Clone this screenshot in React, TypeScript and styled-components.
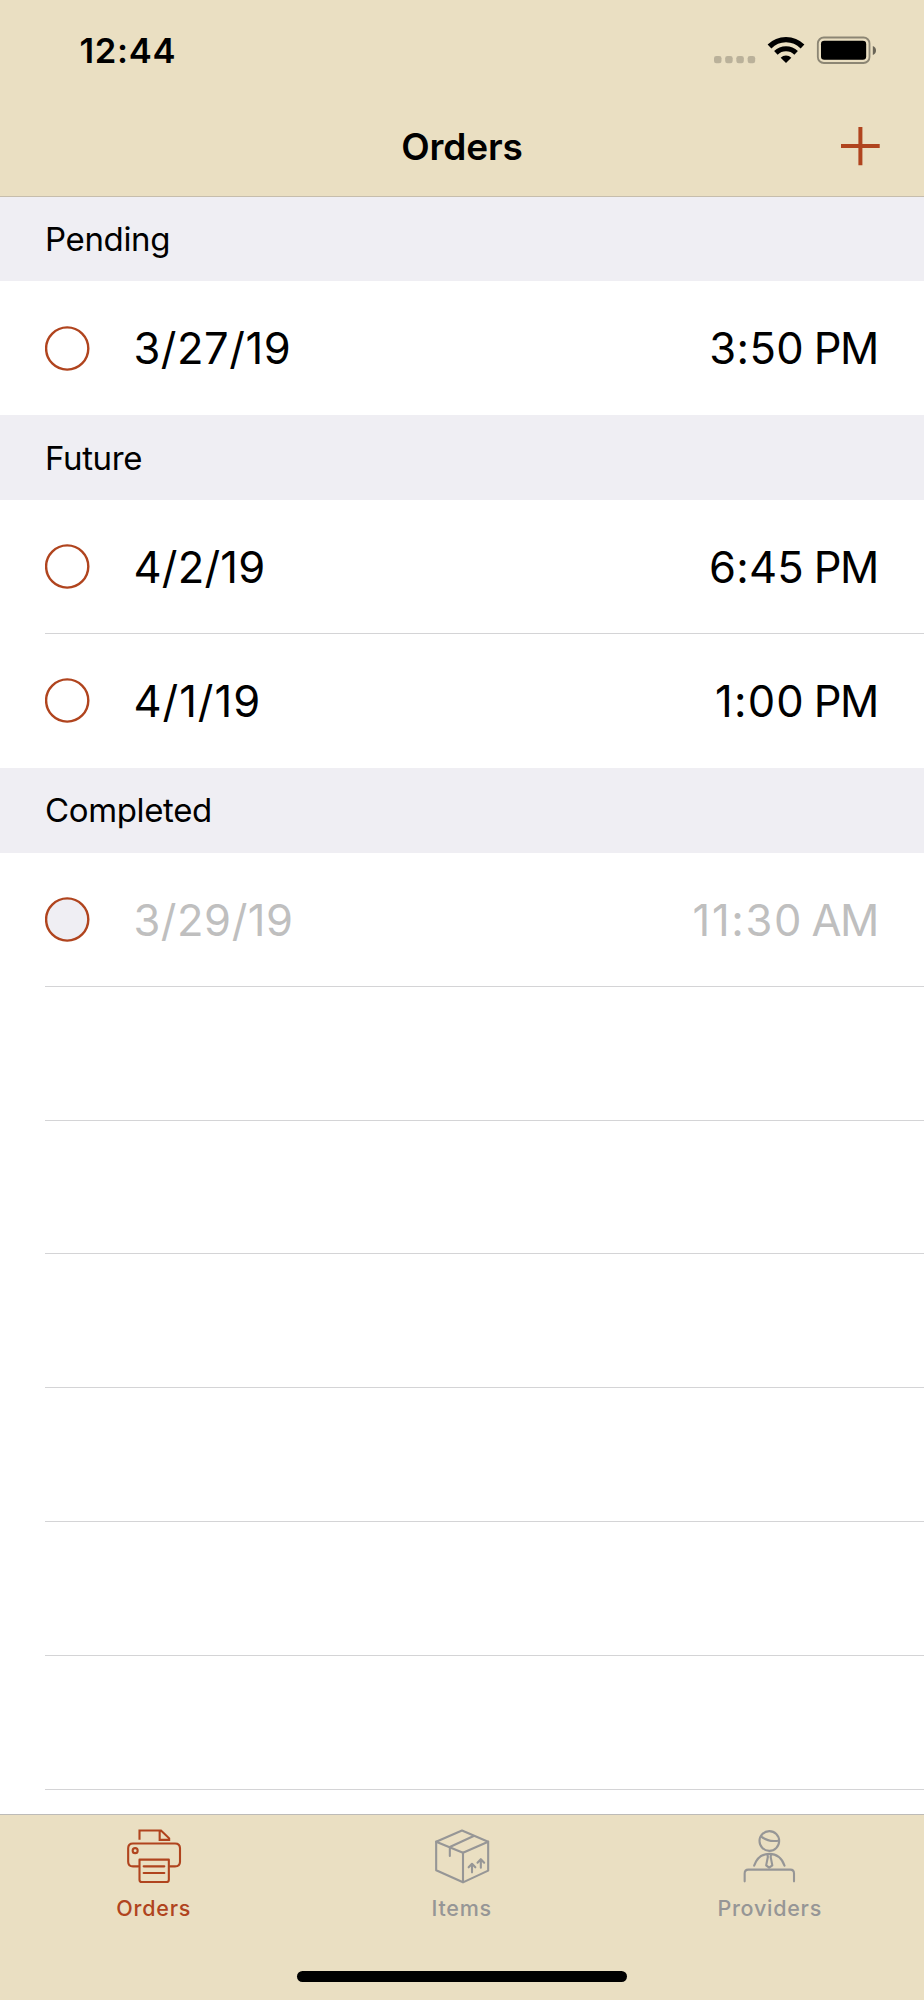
import React from "react";
import styled, { createGlobalStyle } from "styled-components";

const accent = "#b0441e";
const sand = "#eadfc2";
const muted = "#969696";

const GlobalStyle = createGlobalStyle`
  *, *::before, *::after { box-sizing: border-box; }
  body { margin: 0; background: #fff; }
`;

const Screen = styled.div`
  display: flex;
  flex-direction: column;
  width: 924px;
  height: 2000px;
  overflow: hidden;
  background: #fff;
  color: #000;
  font-family: Inter, "Liberation Sans", sans-serif;
`;

const Header = styled.header`
  flex: none;
  height: 197px;
  background: ${sand};
  border-bottom: 1px solid #c6bdac;
`;

const StatusBar = styled.div`
  display: flex;
  justify-content: space-between;
  height: 98px;
  padding: 29px 44px 0 79.4px;
`;

const Clock = styled.div`
  font-size: 34.6px;
  font-weight: 600;
  line-height: 42px;
  letter-spacing: 0.7px;
`;

const StatusIcons = styled.svg`
  display: block;
  width: 168px;
  height: 31px;
  margin-top: 5px;
`;

const NavBar = styled.div`
  display: grid;
  grid-template-columns: 1fr auto 1fr;
  align-items: center;
  height: 97px;
  padding: 0 44px;
`;

const Title = styled.h1`
  grid-column: 2;
  margin: 0;
  padding-top: 1px;
  font-size: 37px;
  font-weight: 600;
  line-height: 44px;
  letter-spacing: -0.1px;
`;

const AddButton = styled.button`
  justify-self: end;
  display: block;
  width: 39px;
  height: 39px;
  padding: 0;
  border: 0;
  background: none;

  svg { display: block; }
`;

const List = styled.main`
  flex: 1;
  min-height: 0;
  margin-top: -0.5px;
  overflow: hidden;
`;

const SectionTitle = styled.h2`
  display: flex;
  align-items: center;
  height: 84.8px;
  margin: 0;
  padding: 0 45px;
  background: #efeef3;
  font-size: 33px;
  font-weight: 400;
  line-height: 40px;
  letter-spacing: -0.36px;
`;

const Row = styled.div<{ $divided?: boolean; $done?: boolean }>`
  display: flex;
  align-items: center;
  height: 133.93px;
  margin-left: 45px;
  padding-top: ${(p) => (p.$divided ? "1px" : "0")};
  padding-right: 46.3px;
  border-bottom: ${(p) => (p.$divided ? "1px solid #d4d4d6" : "0")};
  color: ${(p) => (p.$done ? "#bfbfbf" : "#000")};
  font-size: 43.5px;
  line-height: 54px;
`;

const Check = styled.svg`
  flex: none;
  width: 45px;
  height: 45px;
  margin-right: 43.4px;
`;

const DateText = styled.span<{ $tracking: number }>`
  flex: 1;
  letter-spacing: ${(p) => p.$tracking}px;
`;

const TimeText = styled.span<{ $tracking: number }>`
  letter-spacing: ${(p) => p.$tracking}px;
  word-spacing: ${(p) => -2.2 - 2 * p.$tracking}px;
`;

const Period = styled.span`
  letter-spacing: -1.6px;
`;

const TabBar = styled.nav`
  flex: none;
  display: flex;
  flex-direction: column;
  height: 186px;
  background: ${sand};
  border-top: 1px solid #bdbbb8;
`;

const Tabs = styled.div`
  flex: 1;
  display: grid;
  grid-template-columns: repeat(3, 1fr);
`;

const Tab = styled.div<{ $active?: boolean }>`
  display: flex;
  flex-direction: column;
  align-items: center;
  padding-top: 11px;
  color: ${(p) => (p.$active ? accent : muted)};
`;

const TabIcon = styled.svg`
  width: 60px;
  height: 60px;
  fill: none;
  stroke: currentColor;
  stroke-width: 6.3;
  stroke-linecap: round;
  stroke-linejoin: round;
`;

const TabLabel = styled.span`
  margin-top: 8px;
  padding-right: 0.6px;
  font-size: 21.5px;
  font-weight: 500;
  line-height: 28px;
  letter-spacing: 0.75px;
`;

const HomeIndicator = styled.div`
  width: 330px;
  height: 11px;
  margin: 0 auto 18px;
  border-radius: 6px;
  background: #000;
`;

type Order = {
  date: string;
  dateTracking: number;
  time: string;
  timeTracking: number;
  period: "AM" | "PM";
};
type Section = { title: string; orders: Order[]; done?: boolean };

const sections: Section[] = [
  {
    title: "Pending",
    orders: [{ date: "3/27/19", dateTracking: 0.55, time: "3:50", timeTracking: 0.4, period: "PM" }],
  },
  {
    title: "Future",
    orders: [
      { date: "4/2/19", dateTracking: 0.25, time: "6:45", timeTracking: 0.2, period: "PM" },
      { date: "4/1/19", dateTracking: 1, time: "1:00", timeTracking: 1.2, period: "PM" },
    ],
  },
  {
    title: "Completed",
    orders: [{ date: "3/29/19", dateTracking: 0.55, time: "11:30", timeTracking: 1.7, period: "AM" }],
    done: true,
  },
];

const emptyRows = [0, 1, 2, 3, 4, 5, 6];

export default function App() {
  return (
    <Screen>
      <GlobalStyle />
      <Header>
        <StatusBar>
          <Clock>12:44</Clock>
          <StatusIcons viewBox="96 102 504 93">
            <g opacity="0.2">
              {[102, 135.5, 169, 203].map((x) => (
                <rect key={x} x={x} y="168" width="22.5" height="22" rx="7" />
              ))}
            </g>
            <path d="M268.5 139.5A70 70 0 0 1 367.5 139.5" fill="none" stroke="#000" strokeWidth="16" />
            <path d="M287.6 158.6A43 43 0 0 1 348.4 158.6" fill="none" stroke="#000" strokeWidth="15" />
            <path d="M318 189L302 173A23 23 0 0 1 334 173Z" />
            <rect x="413.5" y="112.5" width="155" height="76.5" rx="18" fill="none" stroke="#000" strokeOpacity="0.4" strokeWidth="5.5" />
            <rect x="423" y="122.5" width="135.5" height="57" rx="10" />
            <path d="M578.5 138Q588 142 588 151.5T578.5 165Z" fillOpacity="0.55" />
          </StatusIcons>
        </StatusBar>
        <NavBar>
          <Title>Orders</Title>
          <AddButton aria-label="Add order">
            <svg width="39" height="39" viewBox="0 0 39 39" stroke={accent} strokeWidth="4">
              <path d="M0 19H38.7M19.4 0V38.2" />
            </svg>
          </AddButton>
        </NavBar>
      </Header>

      <List>
        {sections.map((section) => (
          <section key={section.title}>
            <SectionTitle>{section.title}</SectionTitle>
            {section.orders.map((order, i) => (
              <Row
                key={order.date}
                $done={section.done}
                $divided={section.done || i < section.orders.length - 1}
              >
                <Check viewBox="0 0 45 45">
                  <circle
                    cx="22.2"
                    cy="22.5"
                    r="21.1"
                    fill={section.done ? "#efeef3" : "none"}
                    stroke={accent}
                    strokeWidth="2.4"
                  />
                </Check>
                <DateText $tracking={order.dateTracking}>{order.date}</DateText>
                <TimeText $tracking={order.timeTracking}>
                  {order.time} <Period>{order.period}</Period>
                </TimeText>
              </Row>
            ))}
          </section>
        ))}
        {emptyRows.map((n) => (
          <Row key={n} $divided />
        ))}
      </List>

      <TabBar>
        <Tabs>
          <Tab $active>
            <TabIcon viewBox="102 80 180 180">
              <path d="M148.5 121V93.5H213L237.5 117V121.5H209V94" strokeLinecap="butt" strokeLinejoin="miter" />
              <path d="M145 201H129Q114.5 201 114.5 187V147Q114.5 132.5 129 132.5H255Q270 132.5 270 147V187Q270 201 255 201H240" />
              <circle cx="135.5" cy="154" r="7.5" />
              <path d="M148.5 181H236.5V241Q236.5 248 229.5 248H155.5Q148.5 248 148.5 241Z" />
              <path d="M161 201H223M161 221H223" />
            </TabIcon>
            <TabLabel>Orders</TabLabel>
          </Tab>
          <Tab>
            <TabIcon viewBox="96 80 180 180">
              <path d="M108.5 127L186 93.5L264.5 127V214L189 249L108.5 213Z" />
              <path d="M108.5 127L189 160L264.5 127M189 160V248M149.5 170V143L221 110" />
              <path d="M216 219V195M206 204L216 193.5L226 204M242.5 205V181M232.5 190L242.5 179.5L252.5 190" />
            </TabIcon>
            <TabLabel>Items</TabLabel>
          </Tab>
          <Tab>
            <TabIcon viewBox="120 80 180 180">
              <circle cx="208" cy="125" r="29.5" />
              <path d="M184 112Q205 129 236 124M162.5 199C171 174 187 163.5 208 163.5S245 174 253.5 199" />
              <path d="M202.5 165L203.5 173L198.5 198L207.5 205L217 198L212 173L213 165" />
              <path d="M134 246V222Q134 211 145 211H271Q282 211 282 222V246" />
            </TabIcon>
            <TabLabel>Providers</TabLabel>
          </Tab>
        </Tabs>
        <HomeIndicator />
      </TabBar>
    </Screen>
  );
}
